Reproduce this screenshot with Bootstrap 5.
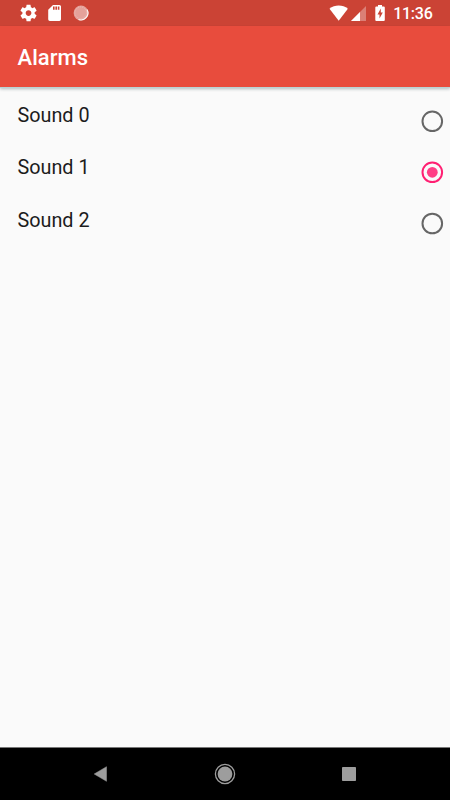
<!DOCTYPE html>
<html lang="en">
<head>
<meta charset="utf-8">
<meta name="viewport" content="width=device-width, initial-scale=1">
<title>Alarms</title>
<link href="https://cdn.jsdelivr.net/npm/bootstrap@5.3.0/dist/css/bootstrap.min.css" rel="stylesheet">
<style>
  body { font-family: Roboto, "Liberation Sans", sans-serif; background: #fafafa; color: #1c1c1c; }
  svg { display: block; flex: none; }
  .status-strip { height: 26px; background: #cb4335; padding: 0 17.500px 0 19px; }
  .status-time { font-size: 16px; font-weight: 500; line-height: 26px; letter-spacing: -.25px; margin-left: 6.700px; padding-top: 2px; }
  .app-header { height: 61px; background: #e84c3d; padding: 3px 17.500px 0; box-shadow: 0 1px 0 #b9d3d5, 0 2px 3px rgba(0,40,50,.3); }
  .app-title { font-size: 22px; font-weight: 500; line-height: 30px; letter-spacing: .05px; }
  .sound-list { padding: 1px 6px 0 17.500px; }
  .sound-label { font-size: 19.800px; line-height: 24px; height: 52.300px; padding-top: 16px; }
  .sound-radio { width: 24px; height: 51.2px; padding-top: 21px; }
  .sys-nav { height: 53px; background: #000; border-top: 1px solid #777; padding: 0 94px 0 93px; }
</style>
<script src="https://cdn.jsdelivr.net/npm/bootstrap@5.3.0/dist/js/bootstrap.bundle.min.js"></script>
</head>
<body>
<div class="vh-100 d-flex flex-column overflow-hidden">
  <div class="status-strip d-flex align-items-center justify-content-between text-white">
    <div class="d-flex align-items-center">
      <svg width="75" height="26" viewBox="0 0 75 26" fill="#fff">
        <path transform="translate(-.3 3.2) scale(.82)" d="M19.43 12.98c.04-.32.07-.64.07-.98s-.03-.66-.07-.98l2.11-1.65c.19-.15.24-.42.12-.64l-2-3.46c-.12-.22-.39-.3-.61-.22l-2.49 1c-.52-.4-1.08-.73-1.69-.98l-.38-2.65C14.46 2.18 14.25 2 14 2h-4c-.25 0-.46.18-.49.42l-.38 2.65c-.61.25-1.17.59-1.69.98l-2.49-1c-.23-.09-.49 0-.61.22l-2 3.46c-.13.22-.07.49.12.64l2.11 1.65c-.04.32-.07.65-.07.98s.03.66.07.98l-2.11 1.65c-.19.15-.24.42-.12.64l2 3.46c.12.22.39.3.61.22l2.49-1c.52.4 1.08.73 1.69.98l.38 2.65c.03.24.24.42.49.42h4c.25 0 .46-.18.49-.42l.38-2.65c.61-.25 1.17-.59 1.69-.98l2.49 1c.23.09.49 0 .61-.22l2-3.46c.12-.22.07-.49-.12-.64l-2.11-1.65zM12 15.5c-1.93 0-3.5-1.57-3.5-3.5s1.57-3.5 3.5-3.5 3.5 1.57 3.5 3.5-1.57 3.5-3.5 3.5z"/>
        <path transform="translate(26 3.3) scale(.8)" d="M18 2h-8L4.02 8 4 20c0 1.100.9 2 2 2h12c1.100 0 2-.9 2-2V4c0-1.100-.9-2-2-2zm-6 6h-2V4h2v4zm3 0h-2V4h2v4zm3 0h-2V4h2v4z"/>
        <circle cx="62" cy="13" r="7.400" fill-opacity=".5"/>
        <circle cx="61.700" cy="12.700" r="5.800" fill="none" stroke="#fff" stroke-opacity=".25" stroke-dasharray="1 1"/>
        <path d="M68 9.500A7 7 0 0 1 59.500 19.500" fill="none" stroke="#fff" stroke-width="1.200" stroke-opacity=".85"/>
      </svg>
    </div>
    <div class="d-flex align-items-center">
      <svg width="57" height="26" viewBox="0 0 57 26" fill="#fff">
        <path d="M.5 8.700C5.700 4.300 13.700 4.300 18.900 8.700L9.700 20.800Z"/>
        <path d="M22 21 37 6V21Z" fill-opacity=".32"/>
        <path d="M22 21 31 12V21Z"/>
        <path d="M47.300 6.500H49V5h4v1.500h1.700q1.100 0 1.100 1.100V20q0 1-1.100 1h-7.400q-1 0-1-1V7.600q0-1.100 1-1.100Z"/>
        <path d="M51.800 8.500 48.500 14.500h2v4l3.300-6h-2Z" fill="#cb4335"/>
      </svg>
      <span class="status-time">11:36</span>
    </div>
  </div>
  <header class="app-header d-flex align-items-center text-white">
    <h1 class="app-title mb-0">Alarms</h1>
  </header>
  <main class="sound-list flex-grow-1 d-flex justify-content-between">
    <div>
      <div class="sound-label">Sound 0</div>
      <div class="sound-label">Sound 1</div>
      <div class="sound-label">Sound 2</div>
    </div>
    <div>
      <div class="sound-radio"><svg width="24" height="24"><circle cx="12.300" cy="12.300" r="9.800" fill="none" stroke="#666" stroke-width="2"/></svg></div>
      <div class="sound-radio"><svg width="24" height="24"><circle cx="12.300" cy="12.300" r="9.800" fill="none" stroke="#ff1f72" stroke-width="2"/><circle cx="12.300" cy="12.300" r="5.400" fill="#ff3d85"/></svg></div>
      <div class="sound-radio"><svg width="24" height="24"><circle cx="12.300" cy="12.500" r="9.800" fill="none" stroke="#666" stroke-width="2"/></svg></div>
    </div>
  </main>
  <nav class="sys-nav d-flex align-items-center justify-content-between">
    <svg width="14" height="16"><path d="M1.200 8 13.500.7V15.300Z" fill="#9d9d9d" stroke="#9d9d9d" stroke-width=".5" stroke-linejoin="round"/></svg>
    <svg width="22" height="22"><circle cx="11" cy="11" r="9.600" fill="none" stroke="#9d9d9d" stroke-width="1.300"/><circle cx="11" cy="11" r="7.400" fill="#9d9d9d"/></svg>
    <svg width="14" height="14"><rect width="14" height="14" rx=".8" fill="#9d9d9d"/></svg>
  </nav>
</div>
</body>
</html>
